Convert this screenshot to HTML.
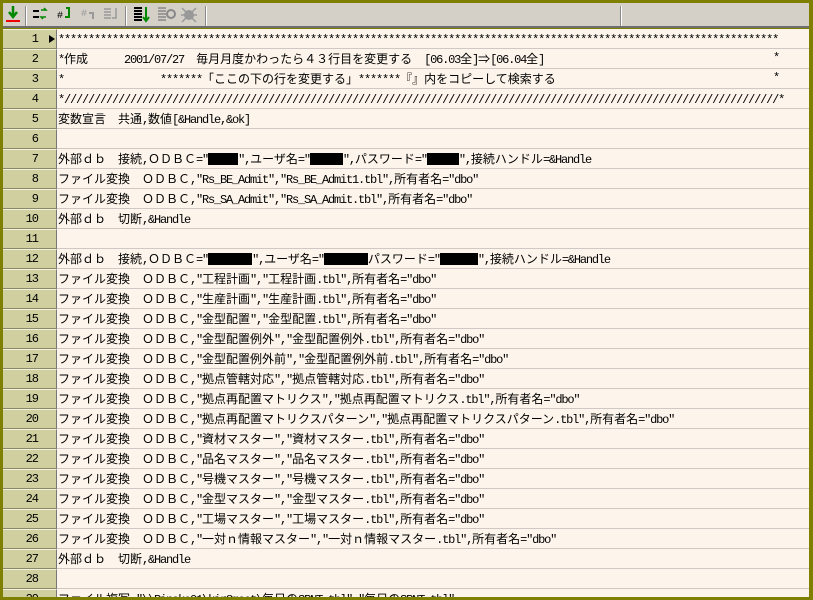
<!DOCTYPE html>
<html><head><meta charset="utf-8"><style>
*{margin:0;padding:0;box-sizing:border-box}
body{width:813px;height:600px;background:#808000;position:relative;overflow:hidden;font-family:"Noto Sans CJK JP","WenQuanYi Zen Hei",sans-serif;font-size:12px;color:#000}
#tb{position:absolute;left:3px;top:3px;width:806px;height:25px;background:#d4d0c8;border-bottom:2px solid #6e6e6e}
.sep{position:absolute;top:3px;width:2px;height:20px;border-left:1px solid #888;border-right:1px solid #fff}
#ed{position:absolute;left:3px;top:29px;width:806px;height:568px;background:#fdf5eb;overflow:hidden}
.r{position:absolute;left:0;width:806px;height:20px;border-bottom:1px solid #cfc8c4}
.g{position:absolute;left:0;top:0;width:54px;height:20px;background:#cfcf9f;border-top:1px solid #f2f2dc;border-bottom:1px solid #8a8a6a;border-right:1px solid #777;text-align:right;padding-right:18px;line-height:19px;font-family:"Liberation Mono",monospace;font-size:12px;letter-spacing:-1px}
.t{position:absolute;left:55px;top:0;line-height:19px;white-space:pre}
i{font-style:normal;font-family:"Liberation Mono",monospace;font-size:12px;letter-spacing:-1.2px}
.b{display:inline-block;background:#000;height:12px;vertical-align:-2px}
.e{position:absolute;left:770px;top:0;line-height:19px;font-family:"Liberation Mono",monospace;font-size:12px}
</style></head><body>
<div id="tb">
<svg width="220" height="25" style="position:absolute;left:0;top:0">
<rect x="3" y="17" width="14" height="2" fill="#e00"/>
<path d="M10 3v9M6 9l4 5 4-5" stroke="#080" stroke-width="2.5" fill="none"/>
<path d="M30 8h6M30 14h6" stroke="#000" stroke-width="2"/><path d="M38 7h5l-2-2M43 14h-5l2 2" stroke="#080" stroke-width="1.5" fill="none"/>
<text x="54" y="15" font-size="10" font-family="Liberation Mono">#</text><path d="M63 5h3v9h-4" stroke="#080" stroke-width="2" fill="none"/>
<text x="78" y="13" font-size="10" font-family="Liberation Mono" fill="#999">#</text><path d="M86 10h4v6" stroke="#999" stroke-width="2" fill="none"/>
<path d="M101 6h7M101 9h7M101 12h7M101 15h7M113 5v10h-4" stroke="#999" stroke-width="1.5" fill="none"/>
<path d="M131 5h8M131 8h8M131 11h8M131 14h8M131 17h8" stroke="#000" stroke-width="2"/><path d="M143 4v13M140 14l3 4 3-4" stroke="#080" stroke-width="2" fill="none"/>
<path d="M155 5h8M155 8h8M155 11h8M155 14h8M155 17h8" stroke="#888" stroke-width="1.5"/><circle cx="168" cy="11" r="4" fill="none" stroke="#888" stroke-width="2"/>
<circle cx="186" cy="12" r="5" fill="#999"/><path d="M179 5l14 14M193 5l-14 14M178 12h16" stroke="#999" stroke-width="1.5"/>
</svg>
<div class="sep" style="left:22px"></div><div class="sep" style="left:122px"></div><div class="sep" style="left:202px"></div><div class="sep" style="left:617px"></div>
</div>
<div id="ed">
<div class="r" style="top:0"><div class="g">1</div><svg style="position:absolute;left:45px;top:5px" width="8" height="10"><path d="M1 1l6 4-6 4z"/></svg><div class="t"><i>************************************************************************************************************************</i></div></div>
<div class="r" style="top:20px"><div class="g">2</div><div class="t"><i>*</i>作成<i>      2001/07/27  </i>毎月月度かわったら４３行目を変更する　<i>[06.03</i>全<i>]</i>⇒<i>[06.04</i>全<i>]</i></div><div class="e">*</div></div>
<div class="r" style="top:40px"><div class="g">3</div><div class="t"><i>*                *******</i>「ここの下の行を変更する」<i>*******</i>『』内をコピーして検索する</div><div class="e">*</div></div>
<div class="r" style="top:60px"><div class="g">4</div><div class="t"><i>*///////////////////////////////////////////////////////////////////////////////////////////////////////////////////////*</i></div></div>
<div class="r" style="top:80px"><div class="g">5</div><div class="t">変数宣言　共通<i>,</i>数値<i>[&amp;Handle,&amp;ok]</i></div></div>
<div class="r" style="top:100px"><div class="g">6</div></div>
<div class="r" style="top:120px"><div class="g">7</div><div class="t">外部ｄｂ　接続<i>,</i>ＯＤＢＣ<i>="</i><span class="b" style="width:30px"></span><i>",</i>ユーザ名<i>="</i><span class="b" style="width:33px"></span><i>",</i>パスワード<i>="</i><span class="b" style="width:32px"></span><i>",</i>接続ハンドル<i>=&amp;Handle</i></div></div>
<div class="r" style="top:140px"><div class="g">8</div><div class="t">ファイル変換　ＯＤＢＣ<i>,"Rs_BE_Admit","Rs_BE_Admit1.tbl",</i>所有者名<i>="dbo"</i></div></div>
<div class="r" style="top:160px"><div class="g">9</div><div class="t">ファイル変換　ＯＤＢＣ<i>,"Rs_SA_Admit","Rs_SA_Admit.tbl",</i>所有者名<i>="dbo"</i></div></div>
<div class="r" style="top:180px"><div class="g">10</div><div class="t">外部ｄｂ　切断<i>,&amp;Handle</i></div></div>
<div class="r" style="top:200px"><div class="g">11</div></div>
<div class="r" style="top:220px"><div class="g">12</div><div class="t">外部ｄｂ　接続<i>,</i>ＯＤＢＣ<i>="</i><span class="b" style="width:44px"></span><i>",</i>ユーザ名<i>="</i><span class="b" style="width:44px"></span>パスワード<i>="</i><span class="b" style="width:38px"></span><i>",</i>接続ハンドル<i>=&amp;Handle</i></div></div>
<div class="r" style="top:240px"><div class="g">13</div><div class="t">ファイル変換　ＯＤＢＣ<i>,"</i>工程計画<i>","</i>工程計画<i>.tbl",</i>所有者名<i>="dbo"</i></div></div>
<div class="r" style="top:260px"><div class="g">14</div><div class="t">ファイル変換　ＯＤＢＣ<i>,"</i>生産計画<i>","</i>生産計画<i>.tbl",</i>所有者名<i>="dbo"</i></div></div>
<div class="r" style="top:280px"><div class="g">15</div><div class="t">ファイル変換　ＯＤＢＣ<i>,"</i>金型配置<i>","</i>金型配置<i>.tbl",</i>所有者名<i>="dbo"</i></div></div>
<div class="r" style="top:300px"><div class="g">16</div><div class="t">ファイル変換　ＯＤＢＣ<i>,"</i>金型配置例外<i>","</i>金型配置例外<i>.tbl",</i>所有者名<i>="dbo"</i></div></div>
<div class="r" style="top:320px"><div class="g">17</div><div class="t">ファイル変換　ＯＤＢＣ<i>,"</i>金型配置例外前<i>","</i>金型配置例外前<i>.tbl",</i>所有者名<i>="dbo"</i></div></div>
<div class="r" style="top:340px"><div class="g">18</div><div class="t">ファイル変換　ＯＤＢＣ<i>,"</i>拠点管轄対応<i>","</i>拠点管轄対応<i>.tbl",</i>所有者名<i>="dbo"</i></div></div>
<div class="r" style="top:360px"><div class="g">19</div><div class="t">ファイル変換　ＯＤＢＣ<i>,"</i>拠点再配置マトリクス<i>","</i>拠点再配置マトリクス<i>.tbl",</i>所有者名<i>="dbo"</i></div></div>
<div class="r" style="top:380px"><div class="g">20</div><div class="t">ファイル変換　ＯＤＢＣ<i>,"</i>拠点再配置マトリクスパターン<i>","</i>拠点再配置マトリクスパターン<i>.tbl",</i>所有者名<i>="dbo"</i></div></div>
<div class="r" style="top:400px"><div class="g">21</div><div class="t">ファイル変換　ＯＤＢＣ<i>,"</i>資材マスター<i>","</i>資材マスター<i>.tbl",</i>所有者名<i>="dbo"</i></div></div>
<div class="r" style="top:420px"><div class="g">22</div><div class="t">ファイル変換　ＯＤＢＣ<i>,"</i>品名マスター<i>","</i>品名マスター<i>.tbl",</i>所有者名<i>="dbo"</i></div></div>
<div class="r" style="top:440px"><div class="g">23</div><div class="t">ファイル変換　ＯＤＢＣ<i>,"</i>号機マスター<i>","</i>号機マスター<i>.tbl",</i>所有者名<i>="dbo"</i></div></div>
<div class="r" style="top:460px"><div class="g">24</div><div class="t">ファイル変換　ＯＤＢＣ<i>,"</i>金型マスター<i>","</i>金型マスター<i>.tbl",</i>所有者名<i>="dbo"</i></div></div>
<div class="r" style="top:480px"><div class="g">25</div><div class="t">ファイル変換　ＯＤＢＣ<i>,"</i>工場マスター<i>","</i>工場マスター<i>.tbl",</i>所有者名<i>="dbo"</i></div></div>
<div class="r" style="top:500px"><div class="g">26</div><div class="t">ファイル変換　ＯＤＢＣ<i>,"</i>一対ｎ情報マスター<i>","</i>一対ｎ情報マスター<i>.tbl",</i>所有者名<i>="dbo"</i></div></div>
<div class="r" style="top:520px"><div class="g">27</div><div class="t">外部ｄｂ　切断<i>,&amp;Handle</i></div></div>
<div class="r" style="top:540px"><div class="g">28</div></div>
<div class="r" style="top:560px"><div class="g">29</div><div class="t">ファイル複写<i>,"\\Pinoko01\kir8meet\</i>毎日の<i>SPNT.tbl","</i>毎日の<i>SPNT.tbl"</i></div></div>
</div>
</body></html>
